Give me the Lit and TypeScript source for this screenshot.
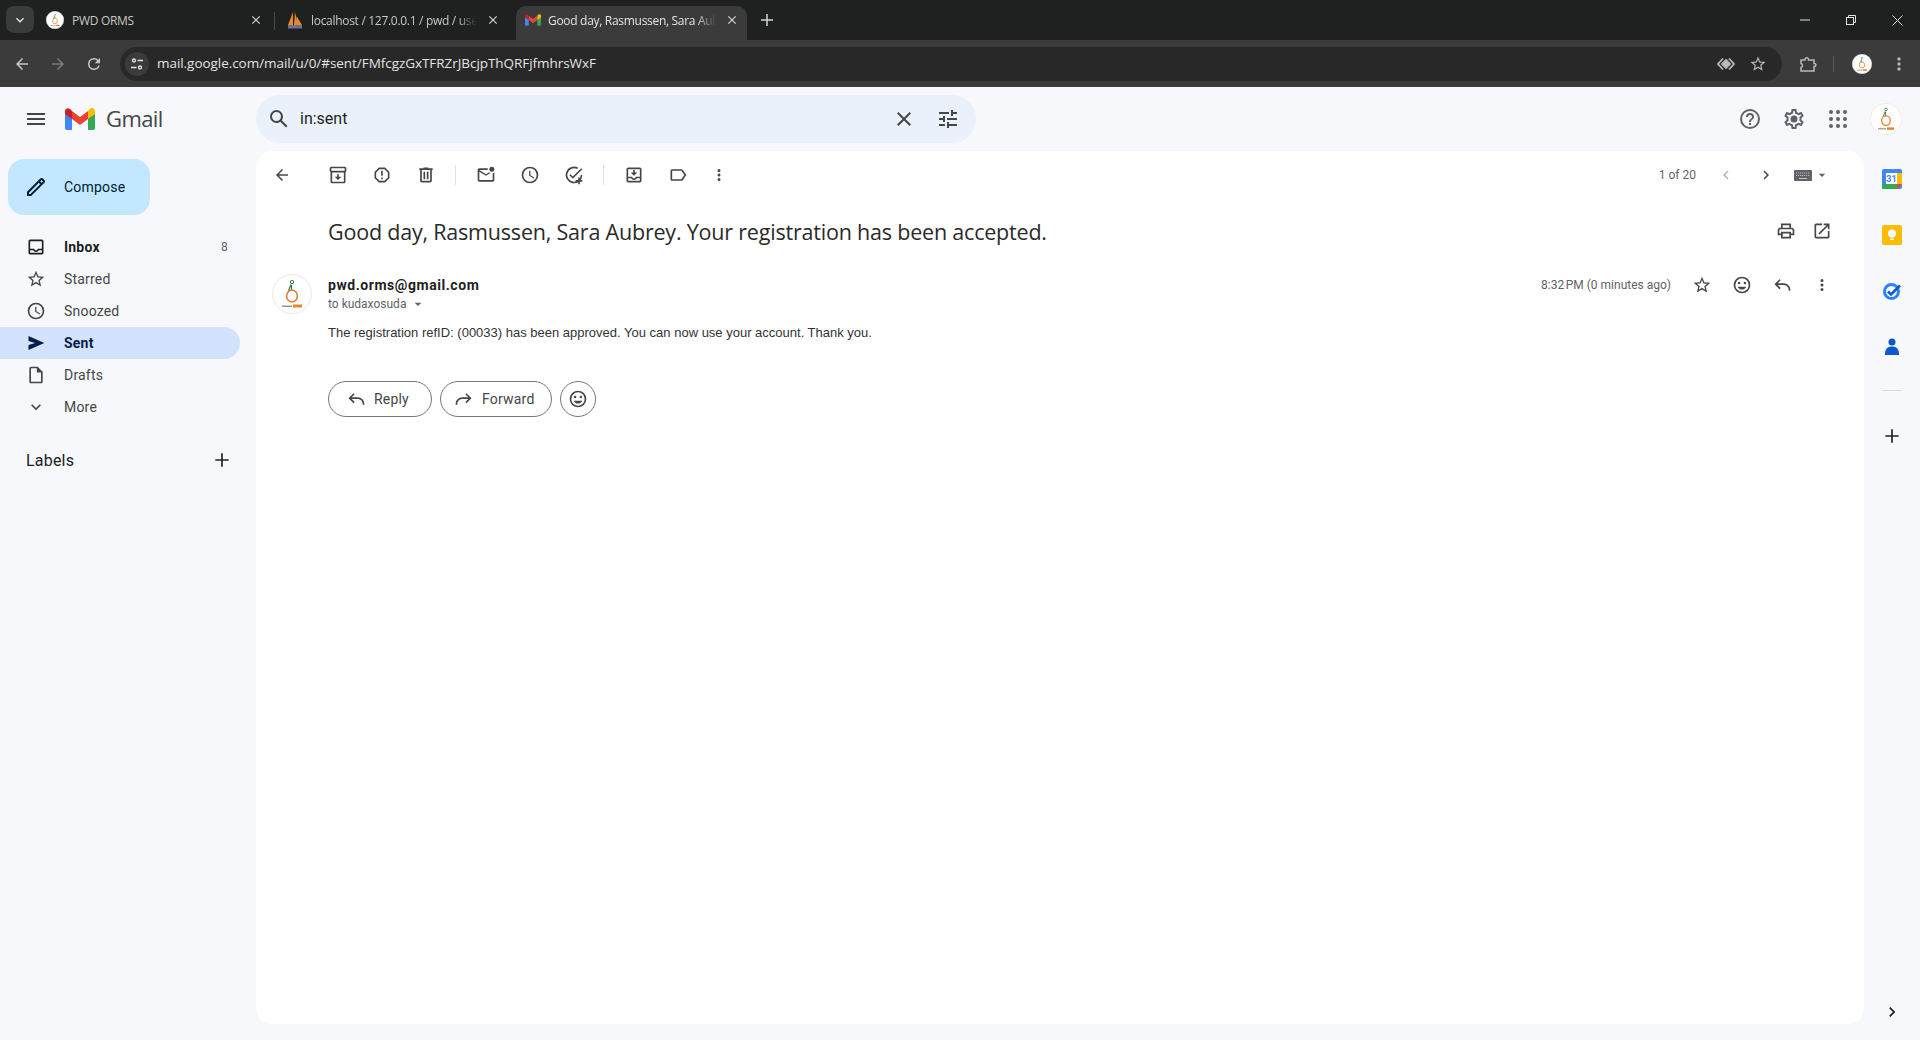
import { LitElement, html, css, svg } from 'lit';
import { customElement } from 'lit/decorators.js';

// material icon paths, 24x24 box
const P = {
  back: 'M20 11H7.83l5.59-5.59L12 4l-8 8 8 8 1.41-1.41L7.83 13H20v-2z',
  forward: 'M4 11h12.17l-5.59-5.59L12 4l8 8-8 8-1.41-1.41L16.17 13H4v-2z',
  reload: 'M17.65 6.35A7.96 7.96 0 0 0 12 4a8 8 0 1 0 7.73 10h-2.08A6 6 0 1 1 12 6c1.66 0 3.14.69 4.22 1.78L13 11h7V4l-2.35 2.35z',
  menu: 'M3 18h18v-2H3v2zm0-5h18v-2H3v2zm0-7v2h18V6H3z',
  search: 'M20.49 19l-5.73-5.73C15.53 12.2 16 10.91 16 9.5A6.5 6.5 0 1 0 9.5 16c1.41 0 2.7-.47 3.77-1.24L19 20.49 20.49 19zM5 9.5C5 7.01 7.01 5 9.5 5S14 7.01 14 9.5 11.99 14 9.5 14 5 11.99 5 9.5z',
  close: 'M19 6.41 17.59 5 12 10.59 6.41 5 5 6.41 10.59 12 5 17.59 6.41 19 12 13.41 17.59 19 19 17.59 13.41 12z',
  tune: 'M3 17v2h6v-2H3zM3 5v2h10V5H3zm10 16v-2h8v-2h-8v-2h-2v6h2zM7 9v2H3v2h4v2h2V9H7zm14 4v-2H11v2h10zm-6-4h2V7h4V5h-4V3h-2v6z',
  help: 'M11 18h2v-2h-2v2zm1-16a10 10 0 1 0 0 20 10 10 0 0 0 0-20zm0 18a8 8 0 1 1 0-16 8 8 0 0 1 0 16zm0-14a4 4 0 0 0-4 4h2c0-1.1.9-2 2-2s2 .9 2 2c0 2-3 1.75-3 5h2c0-2.25 3-2.5 3-5a4 4 0 0 0-4-4z',
  gear: 'M19.43 12.98c.04-.32.07-.64.07-.98 0-.34-.03-.66-.07-.98l2.11-1.65c.19-.15.24-.42.12-.64l-2-3.46c-.09-.16-.26-.25-.44-.25-.06 0-.12.01-.17.03l-2.49 1c-.52-.4-1.08-.73-1.69-.98l-.38-2.65C14.46 2.18 14.25 2 14 2h-4c-.25 0-.46.18-.49.42l-.38 2.65c-.61.25-1.17.59-1.69.98l-2.49-1c-.06-.02-.12-.03-.18-.03-.17 0-.34.09-.43.25l-2 3.46c-.13.22-.07.49.12.64l2.11 1.65c-.04.32-.07.65-.07.98 0 .33.03.66.07.98l-2.11 1.65c-.19.15-.24.42-.12.64l2 3.46c.09.16.26.25.44.25.06 0 .12-.01.17-.03l2.49-1c.52.4 1.08.73 1.69.98l.38 2.65c.03.24.24.42.49.42h4c.25 0 .46-.18.49-.42l.38-2.65c.61-.25 1.17-.59 1.69-.98l2.49 1c.06.02.12.03.18.03.17 0 .34-.09.43-.25l2-3.46c.12-.22.07-.49-.12-.64l-2.11-1.65zm-1.98-1.71c.04.31.05.52.05.73 0 .21-.02.43-.05.73l-.14 1.13.89.7 1.08.84-.7 1.21-1.27-.51-1.04-.42-.9.68c-.43.32-.84.56-1.25.73l-1.06.43-.16 1.13-.2 1.35h-1.4l-.19-1.35-.16-1.13-1.06-.43c-.43-.18-.83-.41-1.23-.71l-.91-.7-1.06.43-1.27.51-.7-1.21 1.08-.84.89-.7-.14-1.13c-.03-.31-.05-.54-.05-.74s.02-.43.05-.73l.14-1.13-.89-.7-1.08-.84.7-1.21 1.27.51 1.04.42.9-.68c.43-.32.84-.56 1.25-.73l1.06-.43.16-1.13.2-1.35h1.39l.19 1.35.16 1.13 1.06.43c.43.18.83.41 1.23.71l.91.7 1.06-.43 1.27-.51.7 1.21-1.07.85-.89.7.14 1.13zM12 8.500a3.500 3.500 0 1 0 0 7 3.500 3.500 0 0 0 0-7z',
  pencil: 'M20.41 4.94l-1.35-1.35c-.78-.78-2.05-.78-2.83 0L3 16.82V21h4.18L20.41 7.77c.79-.78.79-2.05 0-2.83zM6.41 19.06 5 19v-1.36l9.82-9.82 1.41 1.41-9.82 9.83zM17.65 7.82l-1.41-1.41 1.41-1.41 1.41 1.41-1.41 1.41z',
  inbox: 'M19 3H5c-1.1 0-2 .9-2 2v14c0 1.1.9 2 2 2h14c1.1 0 2-.9 2-2V5c0-1.1-.9-2-2-2zm0 16H5v-3h3.56c.69 1.19 1.97 2 3.45 2s2.75-.81 3.45-2H19v3zm0-5h-4.99c0 1.1-.9 2-2 2s-2-.9-2-2H5V5h14v9z',
  star: 'M22 9.24l-7.19-.62L12 2 9.19 8.63 2 9.24l5.46 4.73L5.82 21 12 17.27 18.18 21l-1.63-7.03L22 9.24zM12 15.4l-3.76 2.27 1-4.28-3.32-2.88 4.38-.38L12 6.1l1.71 4.04 4.38.38-3.32 2.88 1 4.28L12 15.4z',
  clock: 'M11.99 2A10 10 0 1 0 12 22a10 10 0 0 0-.01-20zM12 20a8 8 0 1 1 0-16 8 8 0 0 1 0 16zm.5-13H11v6l5.25 3.15.75-1.23-4.5-2.67V7z',
  send: 'M3 20.5V14.5L11 12 3 9.5V3.5L22 12 3 20.5z',
  draft: 'M14 2H6c-1.1 0-2 .9-2 2v16c0 1.1.9 2 2 2h12c1.1 0 2-.9 2-2V8l-6-6zM6 20V4h7v5h5v11H6z',
  chevDown: 'M7.41 8.59 12 13.17l4.59-4.58L18 10l-6 6-6-6z',
  plus: 'M20 13h-7v7h-2v-7H4v-2h7V4h2v7h7v2z',
  archive: 'M20 2H4c-1.1 0-2 .9-2 2v3.01c0 .72.43 1.34 1 1.69V20c0 1.1 1.1 2 2 2h14c.9 0 2-.9 2-2V8.7c.57-.35 1-.97 1-1.69V4c0-1.1-.9-2-2-2zm-1 18H5V9h14v11zm1-13H4V4h16v3zM12 18l4-4h-3v-3h-2v3H8l4 4z',
  spam: 'M15.32 3H8.68c-.26 0-.52.11-.7.29L3.29 7.98c-.18.18-.29.44-.29.7v6.63c0 .27.11.52.29.71l4.68 4.68c.19.19.45.3.71.3h6.63c.27 0 .52-.11.71-.29l4.68-4.68a1 1 0 0 0 .29-.71V8.68c0-.27-.11-.52-.29-.71l-4.68-4.68a1 1 0 0 0-.7-.29zM19 14.9 14.9 19H9.1L5 14.9V9.1L9.1 5h5.8L19 9.1v5.8zM11 7h2v6h-2zm0 8h2v2h-2z',
  trash: 'M15 4V3H9v1H4v2h1v13c0 1.1.9 2 2 2h10c1.1 0 2-.9 2-2V6h1V4h-5zm2 15H7V6h10v13zM9 8h2v9H9zm4 0h2v9h-2z',
  unread: 'M22 8.98V18c0 1.1-.9 2-2 2H4c-1.1 0-2-.9-2-2V6c0-1.1.9-2 2-2h10.1c-.06.32-.1.66-.1 1s.04.68.1 1H4l8 5 3.67-2.29c.47.43 1.02.76 1.63.98L12 13 4 8v10h16V9.9c.74-.15 1.42-.48 2-.92zM19 2a3 3 0 1 0 0 6 3 3 0 0 0 0-6z',
  task: 'M22 5.18 10.59 16.6l-4.24-4.24 1.41-1.41 2.83 2.83 10-10L22 5.18zM12 20a8 8 0 1 1 3.67-15.11l1.5-1.5A10 10 0 1 0 22 12h-2a8 8 0 0 1-8 8zm7-5h-2v3h-3v2h3v3h2v-3h3v-2h-3v-3z',
  move: 'M19 3H5c-1.1 0-2 .9-2 2v14c0 1.1.9 2 2 2h14c1.1 0 2-.9 2-2V5c0-1.1-.9-2-2-2zm0 16H5v-3h3.56c.69 1.19 1.97 2 3.45 2s2.75-.81 3.45-2H19v3zm0-5h-4.99c0 1.1-.9 2-2 2s-2-.9-2-2H5V5h14v9zM12 13l4-4h-3V6h-2v3H8l4 4z',
  label: 'M17.63 5.84C17.27 5.33 16.67 5 16 5L5 5.01C3.9 5.01 3 5.9 3 7v10c0 1.1.9 1.99 2 1.99L16 19c.67 0 1.27-.33 1.63-.84L22 12l-4.37-6.16zM16 17H5V7h11l3.55 5L16 17z',
  dots: 'M12 8a2 2 0 1 0 0-4 2 2 0 0 0 0 4zm0 2a2 2 0 1 0 0 4 2 2 0 0 0 0-4zm0 6a2 2 0 1 0 0 4 2 2 0 0 0 0-4z',
  prev: 'M15.41 7.41 14 6l-6 6 6 6 1.41-1.41L10.83 12z',
  next: 'M10 6 8.59 7.41 13.17 12l-4.58 4.59L10 18l6-6z',
  print: 'M19 8h-1V3H6v5H5c-1.66 0-3 1.34-3 3v6h4v4h12v-4h4v-6c0-1.66-1.34-3-3-3zM8 5h8v3H8V5zm8 14H8v-4h8v4zm4-4h-2v-2H6v2H4v-4c0-.55.45-1 1-1h14c.55 0 1 .45 1 1v4z',
  open: 'M19 19H5V5h7V3H5c-1.1 0-2 .9-2 2v14c0 1.1.9 2 2 2h14c1.1 0 2-.9 2-2v-7h-2v7zM14 3v2h3.59l-9.83 9.83 1.41 1.41L19 6.41V10h2V3h-7z',
  smile: 'M11.99 2A10 10 0 1 0 12 22a10 10 0 0 0-.01-20zM12 20a8 8 0 1 1 0-16 8 8 0 0 1 0 16zm3.5-9a1.5 1.5 0 1 0 0-3 1.5 1.5 0 0 0 0 3zm-7 0a1.5 1.5 0 1 0 0-3 1.5 1.5 0 0 0 0 3zm3.5 6.5c2.33 0 4.31-1.46 5.11-3.5H6.89c.8 2.04 2.78 3.5 5.11 3.5z',
  replyThin: 'M10.41 6.41 9 5l-6 6 6 6 1.41-1.41L6.83 12H14c3.31 0 6 2.69 6 6v1h2v-1c0-4.42-3.58-8-8-8H6.83l3.58-3.59z',
  forwardThin: 'M13.59 6.41 15 5l6 6-6 6-1.41-1.41L17.17 12H10c-3.31 0-6 2.69-6 6v1H2v-1c0-4.42 3.58-8 8-8h7.17l-3.58-3.59z',
  caret: 'M7 10l5 5 5-5z',
};

const icon = (d: string, size = 20) => html`<svg width=${size} height=${size} viewBox="0 0 24 24" fill="currentColor"><path d=${d}></path></svg>`;

// the PWD ORMS round logo, used for favicon and avatars
const pwdLogo = () => svg`
  <circle cx="20" cy="20" r="19.5" fill="#fff" stroke="#f6e4da" stroke-width="1"></circle>
  <circle cx="20" cy="8" r="1.7" fill="none" stroke="#2f7d4f" stroke-width="1"></circle>
  <path d="M19 10.5 16.5 17M19.5 11v6" stroke="#2f7d4f" stroke-width="1.2" fill="none"></path>
  <ellipse cx="20" cy="22" rx="5.4" ry="6" fill="none" stroke="#e8822f" stroke-width="1.6"></ellipse>
  <rect x="21" y="30.5" width="9" height="3" fill="#e8822f"></rect>
  <rect x="10" y="31.5" width="10" height="1.5" fill="#8a9a8a"></rect>`;

const gmailM = (w: number, h: number) => svg`
  <svg width=${w} height=${h} viewBox="0 0 30 22">
    <path d="M2 22h5V10L0 5v15a2 2 0 0 0 2 2z" fill="#4285f4"></path>
    <path d="M23 22h5a2 2 0 0 0 2-2V5l-7 5z" fill="#34a853"></path>
    <path d="M23 3v8l7-5V3.200c0-2.600-3-4-5-2.400z" fill="#fbbc04"></path>
    <path d="M7 11V3l8 6 8-6v8l-8 6z" fill="#ea4335"></path>
    <path d="M0 3.200V6l7 5V3L5 1C3-.6 0 .6 0 3.200z" fill="#c5221f"></path>
  </svg>`;

const NAV = [
  { label: 'Inbox', d: P.inbox, count: '8', cls: 'bold' },
  { label: 'Starred', d: P.star },
  { label: 'Snoozed', d: P.clock },
  { label: 'Sent', d: P.send, cls: 'sel' },
  { label: 'Drafts', d: P.draft },
  { label: 'More', d: P.chevDown },
];

@customElement('app-root')
export class AppRoot extends LitElement {
  static styles = css`
    :host { display: block; width: 1920px; height: 1040px; overflow: hidden; font-family: Roboto, "Liberation Sans", sans-serif; color: #202124; }
    svg { display: block; flex: none; }
    .ib { display: flex; align-items: center; justify-content: center; flex: none; }

    /* browser chrome */
    .tabs { height: 40px; background: #1f2020; display: flex; align-items: flex-end; color: #c7c7c7; font: 12px "Open Sans", sans-serif; }
    .tab-list { align-self: flex-start; margin: 6px 0 0 6px; width: 28px; height: 27px; border-radius: 8px; background: #3a3b3b; color: #e3e3e3; }
    .tab { height: 34px; display: flex; align-items: center; white-space: nowrap; padding-bottom: 6px; box-sizing: border-box; }
    .tab span { flex: 1; min-width: 0; letter-spacing: -0.3px; -webkit-mask-image: linear-gradient(to right, #000 88%, transparent); mask-image: linear-gradient(to right, #000 88%, transparent); }
    .tab .x { color: #d5d5d5; width: 16px; height: 16px; }
    .t1 { width: 240px; padding-left: 12px; }
    .t1 span { margin-left: 8px; -webkit-mask-image: none; mask-image: none; }
    .t1 .x { margin-right: 10px; }
    .tabsep { width: 1px; height: 18px; background: #4a4a4a; margin: 0 12px 10px 0; flex: none; }
    .t2 { width: 229px; }
    .t2 span { margin: 0 8px; }
    .t2 .x { margin-right: 15px; }
    .t3 { width: 231px; background: #3b3b3b; border-radius: 10px 10px 0 0; padding-left: 9px; color: #e3e3e3; }
    .t3 span { margin: 0 8px 0 7px; }
    .t3 .x { margin-right: 7px; }
    .newtab { width: 20px; height: 20px; margin: 0 0 10px 10px; color: #d5d5d5; }
    .win { margin-left: auto; align-self: flex-start; display: flex; color: #e3e3e3; }
    .win .ib { width: 46px; height: 40px; }

    .bar { height: 47px; background: #3b3b3b; display: flex; align-items: center; color: #c7c7c7; }
    .nav-b { width: 36px; height: 34px; }
    .nav-b.off { color: #7d7d7d; }
    .navs { display: flex; margin-left: 4px; }
    .omni { margin-left: 8px; width: 1662px; height: 34px; border-radius: 17px; background: #282828; display: flex; align-items: center; color: #e3e3e3; font: 13.5px "Open Sans", sans-serif; }
    .url { margin: -2px 0 0 8px; flex: 1; letter-spacing: -0.05px; }
    .omni .ib { width: 32px; color: #b9b9b9; }
    .omni .ib.site { width: 24px; height: 24px; margin-left: 5px; border-radius: 50%; background: #3b3b3b; color: #e3e3e3; }
    .omni .star { margin-right: 8px; }
    .bar-r { display: flex; align-items: center; color: #b9b9b9; margin-left: 9px; }
    .ext { margin-left: 8px; }
    .bar-sep { width: 1px; height: 16px; background: #5a5a5a; margin: 0 18px 0 16px; }
    .bar-ava { width: 20px; height: 20px; margin-right: 17px; }

    /* gmail */
    .gm { height: 953px; background: #f6f8fc; display: grid; grid-template-columns: 256px 1608px 56px; grid-template-rows: 64px 873px; }
    .brand { display: flex; align-items: center; padding-left: 24px; color: #444746; }
    .brand .word { margin: -2px 0 0 11px; font: 22px "Open Sans", sans-serif; letter-spacing: -0.6px; color: #444746; }
    .brand .logo { margin-left: 17px; }
    .top { grid-column: 2 / 4; display: flex; align-items: center; }
    .search { width: 720px; height: 48px; border-radius: 24px; background: #eaf1fb; display: flex; align-items: center; color: #1f1f1f; font-size: 16px; box-sizing: border-box; padding-left: 11px; }
    .search .q { margin: -1px 0 0 9px; flex: 1; }
    .search .ib { color: #444746; }
    .search .act { width: 44px; }
    .search .act.last { margin-right: 6px; }
    .top-r { margin-left: auto; display: flex; align-items: center; color: #5f6368; }
    .top-r .ib { width: 44px; height: 40px; }
    .ava { margin: 0 18px 0 10px; }

    .side { font-size: 14px; color: #444746; letter-spacing: 0.2px; }
    .compose { margin: 8px 0 0 8px; width: 142px; height: 56px; border-radius: 16px; background: #c2e7ff; display: flex; align-items: center; padding-left: 16px; box-sizing: border-box; color: #001d35; }
    .compose .t { margin-left: 16px; }
    .nav { margin-top: 16px; width: 240px; }
    .row { height: 32px; display: flex; align-items: center; padding: 0 12px 0 26px; border-radius: 0 16px 16px 0; color: #444746; }
    .row .t { margin-left: 18px; flex: 1; }
    .row .n { font-size: 12px; color: #5f6368; }
    .row.bold { font-weight: 700; color: #1f1f1f; }
    .row.bold .n { font-weight: 400; }
    .row.sel { background: #d3e3fd; font-weight: 700; color: #041e49; }
    .labels { margin: 27px 0 0 26px; width: 206px; display: flex; align-items: center; justify-content: space-between; font-size: 16px; color: #202124; box-sizing: border-box; }

    .card { background: #fff; border-radius: 16px; display: flex; flex-direction: column; }
    .tools { height: 48px; display: flex; align-items: center; color: #444746; }
    .tools .ib { width: 44px; height: 40px; }
    .tools .tsep { width: 1px; height: 20px; background: #e3e3e3; margin: 0 8px 0 7px; flex: none; }
    .tools .first { margin: 0 12px 0 4px; }
    .tools .more { width: 38px; }
    .page { margin-left: auto; font-size: 12px; color: #5f6368; margin-right: 10px; }
    .tools .pg { width: 40px; }
    .tools .pg.off { color: #b0b3b5; }
    .kb { display: flex; align-items: center; margin: 0 34px 0 8px; color: #5f6368; gap: 2px; }

    .subject { margin: 15px 0 0 72px; height: 34px; display: flex; align-items: center; font: 21.5px "Open Sans", sans-serif; color: #2a2a2a; letter-spacing: -0.2px; }
    .subject .s { flex: 1; }
    .subject .ib { width: 36px; height: 32px; color: #444746; }
    .subject .acts { display: flex; margin-right: 24px; }

    .msg { display: flex; margin: 26px 0 0 16px; }
    .msg .pic { margin-right: 16px; }
    .msg-b { flex: 1; padding-top: 1px; }
    .head { display: flex; align-items: center; height: 20px; }
    .from { font-weight: 700; font-size: 14px; color: #1f1f1f; flex: 1; letter-spacing: 0.55px; }
    .time { font-size: 12px; color: #5f6368; margin-right: 11px; }
    .head .acts { display: flex; color: #444746; margin-right: 22px; }
    .head .ib { width: 40px; height: 20px; }
    .to { display: flex; align-items: center; height: 18px; font-size: 12px; color: #5f6368; }
    .to svg { margin-left: 4px; }
    .body { margin-top: 12px; font: 13px "Liberation Sans", sans-serif; color: #333; line-height: 16px; }
    .btns { display: flex; gap: 8px; margin-top: 40px; }
    .btn { height: 36px; box-sizing: border-box; border: 1px solid #747775; border-radius: 18px; display: flex; align-items: center; font-size: 14px; color: #444746; background: #fff; letter-spacing: 0.2px; }
    .btn .t { margin-left: 8px; }
    .btn.r { width: 104px; padding-left: 17px; }
    .btn.f { width: 112px; padding-left: 13px; }
    .btn.e { width: 36px; justify-content: center; color: #444746; }

    .rail { display: flex; flex-direction: column; align-items: center; }
    .rail .a { height: 56px; width: 100%; display: flex; align-items: center; justify-content: center; }
    .rail hr { width: 20px; border: 0; border-top: 1px solid #dadce0; margin: 15px 0 0; }
    .rail .add { margin-top: 35px; color: #1f1f1f; }
    .rail .exp { margin: auto 0 2px; color: #1f1f1f; }
  `;

  render() {
    return html`
      <div class="tabs">
        <div class="ib tab-list">${icon(P.chevDown, 16)}</div>
        <div class="tab t1">
          <svg width="18" height="18" viewBox="0 0 40 40">${pwdLogo()}</svg>
          <span>PWD ORMS</span>
          <div class="ib x">${icon(P.close, 14)}</div>
        </div>
        <div class="tabsep"></div>
        <div class="tab t2">
          <svg width="16" height="18" viewBox="0 0 16 18">
            <path d="M1 14 6 1v13zM7 14l1-13 3 13zM10.500 14 9.500 5 15 14z" fill="#e58a2b"></path>
            <rect x="1" y="14" width="14" height="3.500" fill="#6c6f8f"></rect>
          </svg>
          <span>localhost / 127.0.0.1 / pwd / use</span>
          <div class="ib x">${icon(P.close, 14)}</div>
        </div>
        <div class="tab t3">
          ${gmailM(16, 12)}
          <span>Good day, Rasmussen, Sara Aub</span>
          <div class="ib x">${icon(P.close, 14)}</div>
        </div>
        <div class="ib newtab">${icon(P.plus, 18)}</div>
        <div class="win">
          <div class="ib"><svg width="10" height="10" viewBox="0 0 10 10"><path d="M0 5h10" stroke="currentColor"></path></svg></div>
          <div class="ib"><svg width="10" height="10" viewBox="0 0 10 10" fill="none" stroke="currentColor"><rect x=".5" y="2.500" width="7" height="7"></rect><path d="M2.500 2.500V.5h7v7h-2"></path></svg></div>
          <div class="ib"><svg width="11" height="11" viewBox="0 0 11 11" fill="none" stroke="currentColor"><path d="M.5.5l10 10M10.500.5l-10 10"></path></svg></div>
        </div>
      </div>
      <div class="bar">
        <div class="navs">
          <div class="ib nav-b">${icon(P.back, 18)}</div>
          <div class="ib nav-b off">${icon(P.forward, 18)}</div>
          <div class="ib nav-b">${icon(P.reload, 18)}</div>
        </div>
        <div class="omni">
          <div class="ib site">
            <svg width="14" height="14" viewBox="0 0 14 14" fill="none" stroke="currentColor" stroke-width="1.300"><circle cx="4" cy="3.500" r="1.500"></circle><path d="M7.500 3.500H13M1 10.500h5.500"></path><circle cx="10" cy="10.500" r="1.500"></circle></svg>
          </div>
          <div class="url">mail.google.com/mail/u/0/#sent/FMfcgzGxTFRZrJBcjpThQRFjfmhrsWxF</div>
          <div class="ib">
            <svg width="18" height="14" viewBox="0 0 18 14" fill="none" stroke="currentColor" stroke-width="1.800"><path d="M6 1.500 1 7l5 5.500M12 1.500 17 7l-5 5.500"></path><path d="M9 3l4 4-4 4-4-4z" fill="currentColor"></path></svg>
          </div>
          <div class="ib star">${icon(P.star, 18)}</div>
        </div>
        <div class="bar-r">
          <svg class="ext" width="18" height="18" viewBox="0 0 18 18" fill="none" stroke="currentColor" stroke-width="1.500"><path d="M2 5h4c-.5-3 4-3 3.500 0H15v3.500c2.500-.3 2.500 3.300 0 3V16H2v-3.500C4 12 4 9 2 8.500z"></path></svg>
          <div class="bar-sep"></div>
          <svg class="bar-ava" viewBox="0 0 40 40">${pwdLogo()}</svg>
          ${icon(P.dots, 20)}
        </div>
      </div>
      <div class="gm">
        <div class="brand">
          ${icon(P.menu, 24)}
          <div class="logo">${gmailM(30, 22)}</div>
          <div class="word">Gmail</div>
        </div>
        <div class="top">
          <div class="search">
            <div class="ib">${icon(P.search, 24)}</div>
            <div class="q">in:sent</div>
            <div class="ib act">${icon(P.close, 24)}</div>
            <div class="ib act last">${icon(P.tune, 24)}</div>
          </div>
          <div class="top-r">
            <div class="ib">${icon(P.help, 24)}</div>
            <div class="ib">${icon(P.gear, 24)}</div>
            <div class="ib">
              <svg width="18" height="18" viewBox="0 0 18 18" fill="currentColor">
                ${[2, 9, 16].flatMap((y) => [2, 9, 16].map((x) => svg`<circle cx=${x} cy=${y} r="2"></circle>`))}
              </svg>
            </div>
            <svg class="ava" width="32" height="32" viewBox="0 0 40 40">${pwdLogo()}</svg>
          </div>
        </div>
        <div class="side">
          <div class="compose">${icon(P.pencil, 24)}<span class="t">Compose</span></div>
          <div class="nav">
            ${NAV.map((n) => html`
              <div class="row ${n.cls || ''}">
                ${icon(n.d, 20)}
                <span class="t">${n.label}</span>
                ${n.count ? html`<span class="n">${n.count}</span>` : ''}
              </div>`)}
          </div>
          <div class="labels"><span>Labels</span>${icon(P.plus, 20)}</div>
        </div>
        <div class="card">
          <div class="tools">
            <div class="ib first">${icon(P.back, 18)}</div>
            <div class="ib">${icon(P.archive, 20)}</div>
            <div class="ib">${icon(P.spam, 20)}</div>
            <div class="ib">${icon(P.trash, 20)}</div>
            <div class="tsep"></div>
            <div class="ib">${icon(P.unread, 20)}</div>
            <div class="ib">${icon(P.clock, 20)}</div>
            <div class="ib">${icon(P.task, 20)}</div>
            <div class="tsep"></div>
            <div class="ib">${icon(P.move, 20)}</div>
            <div class="ib">${icon(P.label, 20)}</div>
            <div class="ib more">${icon(P.dots, 18)}</div>
            <div class="page">1 of 20</div>
            <div class="ib pg off">${icon(P.prev, 18)}</div>
            <div class="ib pg">${icon(P.next, 18)}</div>
            <div class="kb">
              <svg width="18" height="11" viewBox="0 0 18 11">
                <rect width="18" height="11" rx="1" fill="#5f6368"></rect>
                <path d="M2 3h14M2 5.500h14" stroke="#c4c7c5" stroke-width="1" stroke-dasharray="1 1"></path>
                <path d="M5 8.500h8" stroke="#c4c7c5" stroke-width="1"></path>
              </svg>
              ${icon(P.caret, 16)}
            </div>
          </div>
          <div class="subject">
            <div class="s">Good day, Rasmussen, Sara Aubrey. Your registration has been accepted.</div>
            <div class="acts">
              <div class="ib">${icon(P.print, 20)}</div>
              <div class="ib">${icon(P.open, 20)}</div>
            </div>
          </div>
          <div class="msg">
            <svg class="pic" width="40" height="40" viewBox="0 0 40 40">${pwdLogo()}</svg>
            <div class="msg-b">
              <div class="head">
                <div class="from">pwd.orms@gmail.com</div>
                <div class="time">8:32\u202FPM (0 minutes ago)</div>
                <div class="acts">
                  <div class="ib">${icon(P.star, 20)}</div>
                  <div class="ib">${icon(P.smile, 20)}</div>
                  <div class="ib">${icon(P.replyThin, 20)}</div>
                  <div class="ib">${icon(P.dots, 18)}</div>
                </div>
              </div>
              <div class="to">to kudaxosuda ${icon(P.caret, 16)}</div>
              <div class="body">The registration refID: (00033) has been approved. You can now use your account. Thank you.</div>
              <div class="btns">
                <div class="btn r">${icon(P.replyThin, 20)}<span class="t">Reply</span></div>
                <div class="btn f">${icon(P.forwardThin, 20)}<span class="t">Forward</span></div>
                <div class="btn e">${icon(P.smile, 20)}</div>
              </div>
            </div>
          </div>
        </div>
        <div class="rail">
          <div class="a">
            <svg width="20" height="20" viewBox="0 0 20 20">
              <rect width="20" height="20" rx="2" fill="#4285f4"></rect>
              <rect x="15" y="4" width="5" height="12" fill="#fbbc04"></rect>
              <rect y="15" width="15" height="5" fill="#34a853"></rect>
              <path d="M15 15h5l-5 5z" fill="#ea4335"></path>
              <rect x="4" y="4" width="11" height="11" fill="#fff"></rect>
              <text x="9.500" y="13" font-size="9" font-weight="700" text-anchor="middle" fill="#4285f4" font-family="Roboto">31</text>
            </svg>
          </div>
          <div class="a">
            <svg width="20" height="20" viewBox="0 0 20 20">
              <rect width="20" height="20" rx="2" fill="#fbbc04"></rect>
              <circle cx="10" cy="8.500" r="4" fill="#fff"></circle>
              <rect x="8" y="13.500" width="4" height="1.500" fill="#fff"></rect>
            </svg>
          </div>
          <div class="a">
            <svg width="20" height="20" viewBox="0 0 20 20" fill="none">
              <circle cx="9.500" cy="10.500" r="7" stroke="#2684fc" stroke-width="3"></circle>
              <path d="M6 10.500l3 3 9-9" stroke="#0b57d0" stroke-width="2.500"></path>
            </svg>
          </div>
          <div class="a">
            <svg width="20" height="20" viewBox="0 0 20 20">
              <circle cx="10" cy="5" r="3.500" fill="#0b57d0"></circle>
              <path d="M3 18c-.5-6 3-8.500 7-8.500s7.500 2.500 7 8.500z" fill="#0b57d0"></path>
            </svg>
          </div>
          <hr />
          <div class="add">${icon(P.plus, 20)}</div>
          <div class="exp">${icon(P.next, 20)}</div>
        </div>
      </div>
    `;
  }
}
